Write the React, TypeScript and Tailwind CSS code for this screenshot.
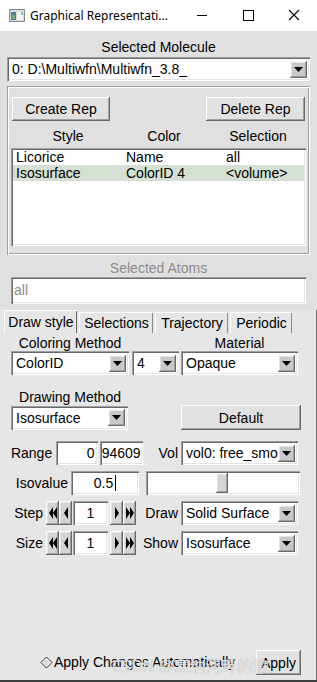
import React from "react";

const sunken =
  "shadow-[inset_1px_1px_0_#a0a0a0,inset_2px_2px_0_#696969,inset_-1px_-1px_0_#ffffff,inset_-2px_-2px_0_#e3e3e3]";
const raised =
  "shadow-[inset_-1px_-1px_0_#696969,inset_1px_1px_0_#ffffff,inset_-2px_-2px_0_#a0a0a0,inset_2px_2px_0_#e3e3e3]";
const groove =
  "shadow-[inset_1px_1px_0_#a0a0a0,inset_2px_2px_0_#ffffff,inset_-1px_-1px_0_#ffffff,inset_-2px_-2px_0_#a0a0a0]";

const Arrow = () => (
  <div className={`w-[17px] h-[17px] shrink-0 bg-[#c8c8c8] ${raised} flex items-center justify-center`}>
    <svg width="9" height="5" viewBox="0 0 9 5">
      <path d="M0 0H9L4.5 5Z" fill="#000" />
    </svg>
  </div>
);

const Combo = ({ className, text }: { className: string; text: string }) => (
  <div className={`${className} h-[24px] bg-white ${sunken} flex items-center pl-[5px] pr-[3px]`}>
    <span className="flex-1 overflow-hidden whitespace-nowrap leading-[16px]">{text}</span>
    <Arrow />
  </div>
);

const Button = ({ className, children }: { className: string; children: React.ReactNode }) => (
  <div className={`${className} ${raised} bg-[#e1e1e1] flex items-center justify-center leading-[16px]`}>
    {children}
  </div>
);

const SpinBtn = ({ left, double }: { left?: boolean; double?: boolean }) => (
  <div className={`w-[13px] h-[24px] bg-[#d4d4d4] ${raised} flex items-center justify-center`}>
    <svg width={double ? 8 : 4} height="12" viewBox={double ? "0 0 8 12" : "0 0 4 12"}>
      {left ? (
        <path d={double ? "M4 0L0 6L4 12Z M8 0L4 6L8 12Z" : "M4 0L0 6L4 12Z"} fill="#000" />
      ) : (
        <path d={double ? "M0 0L4 6L0 12Z M4 0L8 6L4 12Z" : "M0 0L4 6L0 12Z"} fill="#000" />
      )}
    </svg>
  </div>
);

const Spinner = () => (
  <div className="flex items-center">
    <SpinBtn left double />
    <SpinBtn left />
    <div className={`ml-[1px] w-[35px] h-[24px] bg-white ${sunken} flex items-center justify-center`}>1</div>
    <div className="ml-[2px] flex">
      <SpinBtn />
      <SpinBtn double />
    </div>
  </div>
);

const RightLabel = ({ label, value }: { label: string; value: string }) => (
  <div className="flex items-center">
    <span className="w-[35px] text-right">{label}</span>
    <Combo className="ml-[3px] w-[117px]" text={value} />
  </div>
);

const reps = [
  { style: "Licorice", color: "Name", sel: "all" },
  { style: "Isosurface", color: "ColorID 4", sel: "<volume>" },
];

export default function App() {
  return (
    <div className="relative w-[317px] h-[682px] flex flex-col overflow-hidden bg-[#e0e0e0] text-[14px] text-black font-['Liberation_Sans',Arial,sans-serif]">
      {/* title bar */}
      <div className="h-[31px] shrink-0 bg-white flex items-center font-['Noto_Sans',sans-serif] text-[12px]">
        <svg className="ml-[9px]" width="16" height="13" viewBox="0 0 16 13">
          <rect x="0.5" y="0.5" width="15" height="12" fill="#dcdcdc" stroke="#8a8a8a" />
          <rect x="2" y="3" width="5" height="8" fill="#4a7fa0" />
          <rect x="3" y="6" width="3" height="4" fill="#6fb07a" />
          <rect x="8" y="3" width="6" height="8" fill="#f4f4f4" />
          <rect x="12" y="3" width="2" height="3" fill="#9ab4c8" />
        </svg>
        <span className="ml-[5px] whitespace-nowrap">Graphical Representati...</span>
        <div className="ml-auto flex items-center">
          <svg width="46" height="31" viewBox="0 0 46 31">
            <path d="M18 15.5H28" stroke="#000" strokeWidth="1" />
          </svg>
          <svg width="46" height="31" viewBox="0 0 46 31">
            <rect x="18.5" y="10.5" width="10" height="10" fill="none" stroke="#000" />
          </svg>
          <svg width="46" height="31" viewBox="0 0 46 31">
            <path d="M18 10L28 20M28 10L18 20" stroke="#000" strokeWidth="1.1" />
          </svg>
        </div>
      </div>

      <div className="px-[7px]">
        <div className="mt-[8px] h-[17px] leading-[17px] text-center">Selected Molecule</div>
        <Combo className="mt-[1px] w-[303px]" text="0: D:\Multiwfn\Multiwfn_3.8_" />

        {/* reps frame */}
        <div className={`mt-[5px] h-[169px] ${groove} px-[4px] pt-[11px]`}>
          <div className="flex justify-between px-[1px]">
            <Button className="w-[98px] h-[24px]">Create Rep</Button>
            <Button className="w-[99px] h-[24px]">Delete Rep</Button>
          </div>
          <div className="mt-[7px] flex h-[16px] leading-[16px]">
            <span className="w-[114px] shrink-0 text-center">Style</span>
            <span className="w-[78px] shrink-0 text-center">Color</span>
            <span className="w-[110px] shrink-0 text-center">Selection</span>
          </div>
          <div className={`mt-[4px] h-[98px] bg-white ${sunken} pt-[1px] px-[2px]`}>
            {reps.map((r, i) => (
              <div
                key={r.style}
                className={`grid grid-cols-[110px_100px_1fr] h-[16px] leading-[16px] pl-[3px] ${i === 1 ? "bg-[#d3e0d3]" : ""}`}
              >
                <span>{r.style}</span>
                <span>{r.color}</span>
                <span>{r.sel}</span>
              </div>
            ))}
          </div>
        </div>

        <div className="mt-[5px] h-[17px] leading-[17px] text-center text-[#8c8c8c]">Selected Atoms</div>
        <div className={`mx-[4px] h-[27px] bg-white ${sunken} flex items-center pl-[3px] text-[#8c8c8c]`}>all</div>
      </div>

      {/* notebook */}
      <div className="mt-[6px] flex-1 flex flex-col bg-[#e6e6e6] shadow-[inset_-1px_0_0_#6a6a6a]">
        <div className="flex items-end h-[23px] pl-[4px]">
          <div className="h-[23px] w-[73px] border-l border-t border-white shadow-[inset_-1px_0_0_#696969] flex items-center justify-center leading-[16px]">
            Draw style
          </div>
          <div className="ml-[2px] h-[21px] w-[74px] border-l border-t border-white shadow-[inset_-1px_0_0_#8a8a8a] flex items-center justify-center leading-[16px]">
            Selections
          </div>
          <div className="ml-[2px] h-[21px] w-[73px] border-l border-t border-white shadow-[inset_-1px_0_0_#8a8a8a] flex items-center justify-center leading-[16px]">
            Trajectory
          </div>
          <div className="ml-[2px] h-[21px] w-[62px] border-l border-t border-white shadow-[inset_-1px_0_0_#8a8a8a] flex items-center justify-center leading-[16px]">
            Periodic
          </div>
        </div>

        {/* draw style panel */}
        <div className="pl-[11px]">
          <div className="mt-[2px] flex h-[16px] leading-[16px]">
            <span className="w-[118px] text-center">Coloring Method</span>
            <span className="ml-[52px] w-[117px] text-center">Material</span>
          </div>
          <div className="flex items-center">
            <Combo className="w-[118px]" text="ColorID" />
            <Combo className="ml-[3px] w-[47px]" text="4" />
            <Combo className="ml-[2px] w-[117px]" text="Opaque" />
          </div>

          <div className="mt-[14px] h-[16px] leading-[16px] w-[118px] text-center">Drawing Method</div>
          <div className="flex items-center">
            <Combo className="w-[117px]" text="Isosurface" />
            <Button className="ml-[53px] w-[120px] h-[25px]">Default</Button>
          </div>
        </div>

        <div className="mt-[11px] flex items-center h-[24px]">
          <div className="w-[143px] flex items-center">
            <span className="w-[53px] text-right">Range</span>
            <div className={`ml-[4px] w-[42px] h-[24px] bg-white ${sunken} flex items-center justify-end pr-[3px]`}>0</div>
            <div className={`ml-[2px] w-[44px] h-[24px] bg-white ${sunken} flex items-center pl-[2px]`}>94609</div>
          </div>
          <RightLabel label="Vol" value="vol0: free_smooth" />
        </div>

        <div className="mt-[6px] flex items-center h-[24px]">
          <span className="w-[68px] text-right">Isovalue</span>
          <div className={`ml-[3px] w-[68px] h-[24px] bg-white ${sunken} flex items-center justify-center`}>
            <span>0.5</span>
            <span className="ml-[2px] w-[1px] h-[16px] bg-black" />
          </div>
          <div className={`ml-[7px] w-[154px] h-[24px] bg-white ${sunken} p-[2px]`}>
            <div className={`ml-[68px] w-[12px] h-full bg-[#d4d4d4] ${raised}`} />
          </div>
        </div>

        <div className="mt-[6px] flex items-center h-[24px]">
          <div className="w-[143px] flex items-center">
            <span className="w-[43px] text-right">Step</span>
            <div className="ml-[3px]">
              <Spinner />
            </div>
          </div>
          <RightLabel label="Draw" value="Solid Surface" />
        </div>

        <div className="mt-[6px] flex items-center h-[24px]">
          <div className="w-[143px] flex items-center">
            <span className="w-[43px] text-right">Size</span>
            <div className="ml-[3px]">
              <Spinner />
            </div>
          </div>
          <RightLabel label="Show" value="Isosurface" />
        </div>

        <div className="mt-auto mb-[5px] flex items-center pl-[40px] pr-[16px]">
          <svg width="13" height="13" viewBox="0 0 13 13">
            <path d="M6.5 1L12 6.5L6.5 12L1 6.5Z" fill="#d8d8d8" stroke="#3a3a3a" strokeWidth="1" />
            <path d="M2.5 6.5L6.5 2.5L10.5 6.5L6.5 10.5Z" fill="none" stroke="#ffffff" strokeWidth="1" />
          </svg>
          <span className="ml-[1px] whitespace-nowrap">Apply Changes Automatically</span>
          <Button className="ml-auto w-[45px] h-[25px]">Apply</Button>
        </div>
        <div className="h-[2px] bg-[#3c3c3c]" />
      </div>

      <span className="absolute left-[112px] top-[654px] text-[16px] text-white/70 [text-shadow:0_0_1px_#9a9a9a] font-['Noto_Sans','Noto_Sans_CJK_SC',sans-serif] whitespace-nowrap pointer-events-none">
        CSDN @塞纳河畔的歌
      </span>
    </div>
  );
}
